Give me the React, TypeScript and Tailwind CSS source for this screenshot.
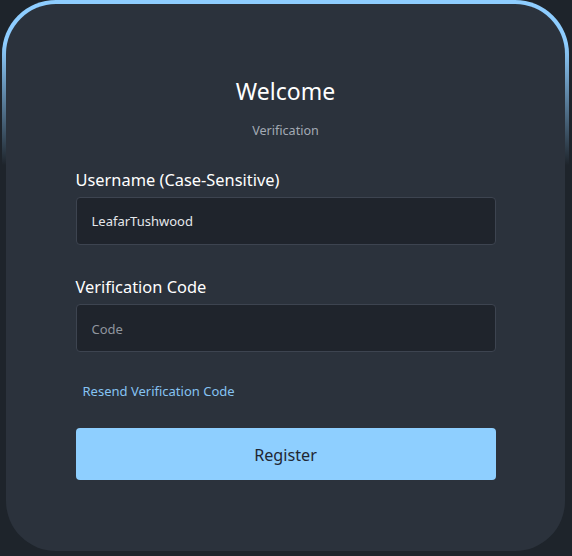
export default function App() {
  return (
    <div className="w-[572px] h-[556px] bg-[#1e242b] pl-[2px] font-['Noto_Sans',sans-serif]">
      <div className="w-[567px] h-[551px] rounded-[54px] p-[4px] pb-0 bg-gradient-to-b from-[#8ecdff] from-[8%] to-transparent to-[30%]">
        <div className="h-full rounded-[50px] bg-[#2b323c] flex flex-col items-center pt-[71px]">
          <h1 className="text-[23px] leading-[32px] text-white">Welcome</h1>
          <p className="mt-[15px] text-[12.6px] leading-[18px] text-[#a3aab4]">Verification</p>

          <div className="w-[420px] mt-[28px]">
            <label className="block text-[16.4px] leading-[24px] text-white">Username (Case-Sensitive)</label>
            <div className="mt-[5px] h-[48px] rounded-[4px] border border-[#3d4450] bg-[#1f242c] flex items-center px-[15px] pt-[2px] text-[13px] text-[#e5e7eb]">
              LeafarTushwood
            </div>

            <label className="block mt-[30px] text-[16.4px] leading-[24px] text-white">Verification Code</label>
            <div className="mt-[5px] h-[48px] rounded-[4px] border border-[#3d4450] bg-[#1f242c] flex items-center px-[15px] pt-[3px] text-[13px] text-[#8f959e]">
              Code
            </div>

            <a className="block mt-[30px] ml-[7px] text-[13px] leading-[18px] text-[#86c3f2]">Resend Verification Code</a>

            <button className="block mt-[28px] w-full h-[52px] rounded-[4px] bg-[#8ecfff] pt-[2px] text-[16.2px] text-[#1f2733]">
              Register
            </button>
          </div>
        </div>
      </div>
    </div>
  );
}
